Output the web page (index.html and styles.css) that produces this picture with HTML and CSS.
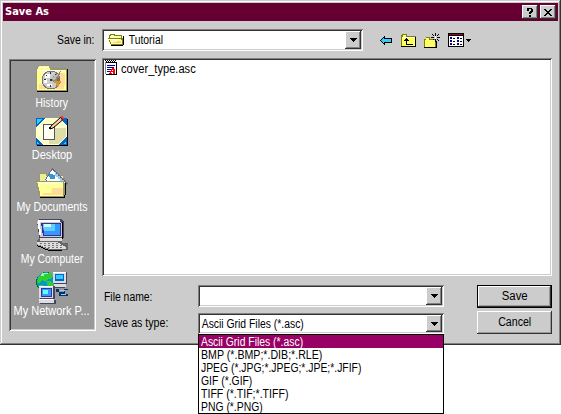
FILE: index.html
```html
<!DOCTYPE html>
<html lang="en">
<head>
<meta charset="utf-8">
<title>Save As</title>
<link rel="stylesheet" href="styles.css">
</head>
<body>
<main class="dialog">
  <header class="titlebar">
    <h1>Save As</h1>
    <button class="caption-button" aria-label="Help"><svg width="8" height="9" viewBox="0 0 8 9"><path d="M1 0h5v1h1v3H6v1H5v1H3V4h1V3h1V1H3v2H1zM3 7h2v2H3z"/></svg></button>
    <button class="caption-button" aria-label="Close"><svg width="8" height="7" viewBox="0 0 8 7"><path d="M0 0h2v1h1v1h2V1h1V0h2v1H7v1H6v1H5v1h1v1h1v1h1v1H6V6H5V5H3v1H2v1H0V6h1V5h1V4h1V3H2V2H1V1H0z"/></svg></button>
  </header>
  <div class="toolbar">
    <label class="save-in-label"><span class="t-savein">Save in:</span></label>
    <div class="combo look-in">
      <svg class="folder" width="17" height="14" viewBox="0 0 17 14"><path fill="#808000" d="M2 1h5v1h7v3h2v6h-1v1H3v-1H2V9H1V6H0V5h1V2h1z"/><path fill="#ffff99" d="M3 2h3v1h7v2H2V3h1zM1 6h12v1h1v4H3V9H2V7H1z"/><path fill="#fff" d="M3 3h4v1H3zM2 6h9v1H2z"/><path fill="#fc9" d="M5 9h8v1H5zM9 8h4v1H9z"/><path fill="#000" d="M15 3h1v9h-1v1H3v-1h12z"/></svg>
      <span class="value t-tutorial">Tutorial</span>
      <button class="arrow" aria-label="Open"><svg width="7" height="4" viewBox="0 0 7 4"><path d="M0 0h7v1H6v1H5v1H4v1H3V3H2V2H1V1H0z"/></svg></button>
    </div>
    <nav class="tools">
      <svg width="12" height="11" viewBox="0 0 12 11"><path d="M4 1h1v2h7v5H5v2H4V9H3V8H2V7H1V6H0V5h1V4h1V3h1V2h1z"/><path fill="#3cf" d="M4 3v1h7v3H4v1H3V7H2V6H1V5h1V4h1V3z"/></svg>
      <svg width="15" height="13" viewBox="0 0 15 13"><path fill="#808000" d="M1 0h5v2h9v11H0V1h1z"/><path fill="#ffff66" d="M2 1h3v2h9v9H1V3h1z"/><path fill="#fff" d="M1 3h13v1H1z"/><path d="M5 4h1v1h1v1h1v1H6v3h6v1H5V7H3V6h1V5h1zM14 3h1v10H0v-1h14z"/></svg>
      <svg width="16" height="15" viewBox="0 0 16 15"><path fill="#808000" d="M2 4h4v2h6v9H0V6h2z"/><path fill="#ffff66" d="M2 5h3v2h6v7H1V7h1z"/><path d="M12 8h1v7H0v-1h12zM11 0h1v3h-1zM8 1h1v1H8zM9 2h1v1H9zM14 1h1v1h-1zM13 2h1v1h-1zM7 4h3v1H7zM13 4h3v1h-3zM9 6h1v1H9zM13 6h1v1h-1zM14 7h1v1h-1zM11 6h1v3h-1z"/><path fill="#ccc" d="M10 3h3v3h-3z"/><path fill="#fff" d="M11 3h1v3h-1z"/></svg>
      <svg width="23" height="14" viewBox="0 0 23 14"><path d="M0 0h16v14H0z"/><path fill="#fff" d="M1 3h14v10H1z"/><path fill="#903" d="M1 1h14v1H1z"/><path fill="#009" d="M2 4h2v2H2zM9 4h2v2H9zM2 7h2v2H2zM9 7h2v2H9zM2 10h2v2H2zM9 10h2v2H9z"/><path d="M5 5h2v1H5zM12 5h2v1h-2zM5 8h2v1H5zM12 8h2v1h-2zM5 11h2v1H5zM12 11h2v1h-2zM18 6h5v1h-1v1h-1v1h-1V8h-1V7h-1z"/></svg>
    </nav>
  </div>
  <div class="content">
    <aside class="places">
      <a class="place">
        <svg width="32" height="32" viewBox="0 0 32 32"><path fill="#996" d="M0 4h1V3h1V2h1V1h10v1h1v1h1v1h16v23H0z"/><path fill="#ffff99" d="M1 5h1V3h1V2h10v2h1v2h16v20H1z"/><path fill="#fd9" d="M3 20h25v5H3zM23 9h6v12h-6z"/><path fill="#fff" d="M3 3h9v1H3zM1 6h28v1H1z"/><path d="M31 5h1v23H1v-1h30z"/><circle cx="15" cy="16" r="9.5" fill="#777"/><circle cx="15" cy="16" r="8.5" fill="#ccc"/><path fill="#fff" d="M9 10h5v4H9zM8 15h3v4H8zM11 20h5v2h-5z"/><path fill="#888" d="M14 15L25 7l-3 9-5 2z"/><path fill="#bbb" d="M14 15L23 9l-4 7z"/><path fill="#c93" d="M18 17h7v2h-2v3h-3v-3h-2z"/><path fill="#963" d="M21 14h3v3h-3z"/><path fill="#333" d="M14 8h1v2h-1zM8 15h2v1H8zM14 21h1v2h-1zM10 11h1v1h-1zM19 10h1v1h-1zM14 15h2v2h-2z"/></svg>
        <span class="t-history">History</span>
      </a>
      <a class="place">
        <svg width="32" height="32" viewBox="0 0 32 32"><path d="M1 3h31v27H1z"/><path fill="#ffc" d="M0 2h31v27H0z"/><path fill="#dda" d="M19 12l11 0v8l-8 8h-9v-4h6z"/><path fill="#06c" d="M0 2h9L0 11zM24 2h7v8zM0 22l8 7H0zM31 21v8h-9z"/><path fill="#3cf" d="M1 3h5L1 8zM1 26l3 2H1zM27 28l3-3v3z"/><path fill="#555" d="M7 8h12v16H7z"/><path fill="#fff" d="M8 9h10v14H8z"/><path fill="#ffe" d="M10 13h8v9h-8z"/><path shape-rendering="auto" stroke="#000" stroke-width="1" fill="#fc9" d="M14 13l1-3L24.500 1.500l2 2.500L17 12z"/><path d="M13 11h1v1h1v1h-2z"/><path fill="#f33" d="M25 0h2v1h1v2h-2V2h-1z"/></svg>
        <span class="t-desktop">Desktop</span>
      </a>
      <a class="place">
        <svg width="32" height="32" viewBox="0 0 32 32"><path fill="#996" d="M3 6h1V5h7v2h16v3h2v18H3z"/><path fill="#ee9" d="M4 6h6v2h17v5H4z"/><path fill="#668" d="M9 12L16 0l16 15-7 8z"/><path fill="#fff" d="M10 12l6-10 14 13-5 6z"/><path fill="#39c" d="M13 6h4v1h2v4h-5V9h-1z"/><path fill="#9cf" d="M19 4h1v2h2v2h2v2h2v2h2v2h-2v-1h-2v-2h-2v-2h-2V8h-1z"/><path d="M4 29h24v-2h1V15h1v12h-1v3H4z"/><path fill="#996" d="M0 12h2v1h26v2h1v11h-1v3H3v-3H2v-6H1v-5H0z"/><path fill="#ff9" d="M1 14h26v14H4v-5H3v-4H2v-4H1z"/><path fill="#fd9" d="M16 20h11v7H16zM7 25h10v2H7z"/><path fill="#ffc" d="M2 14h24v2H2z"/></svg>
        <span class="t-documents">My Documents</span>
      </a>
      <a class="place">
        <svg width="32" height="32" viewBox="0 0 32 32"><path fill="#446" d="M1 1l2-2h22l3 3v16l-3 1H4l-1-3z"/><path fill="#ccc" d="M1 1h22l3 2v14H4z"/><path fill="#fff" d="M2 0h22v2H2zM2 2h2l1 13H3z"/><path fill="#339" d="M5 3h20v13H7z"/><path fill="#39f" d="M7 4h17v11H8z"/><path fill="#6cf" d="M7 4h12v7H8z"/><path fill="#cff" d="M8 4h7v3H8z"/><path fill="#666" d="M4 18h22v5h6v7H14L1 24v-4z"/><path fill="#ddd" d="M4 18h22v3H4zM1 22h20l9 5v2H14L1 24z"/><path d="M1 25l12 5h13v1H13L1 26zM26 2h1v17h-1z"/><path fill="#777" d="M4 23h2v1H4zM8 23h2v1H8zM12 23h2v1h-2zM16 23h2v1h-2zM20 23h2v1h-2zM8 25h2v1H8zM12 25h2v1h-2zM16 25h2v1h-2zM20 25h2v1h-2zM24 25h2v1h-2zM12 27h2v1h-2zM16 27h2v1h-2zM20 27h2v1h-2zM24 27h2v1h-2z"/></svg>
        <span class="t-computer">My Computer</span>
      </a>
      <a class="place">
        <svg width="32" height="32" viewBox="0 0 32 32"><circle cx="10" cy="10" r="10" fill="#063"/><circle cx="10" cy="9.5" r="9.3" fill="#09c"/><path fill="#3c3" d="M2 5l5-4h7l3 3-2 3-3 0-2 3-4-2-3 3-2 0zM11 9h4l3 4-3 3-4-3zM3 13h3l3 3-4 2z"/><path fill="#9f9" d="M6 1h6v1H8v2H5z"/><path fill="#446" d="M18 0h13v12h-2v4h-11z"/><path fill="#ddd" d="M17 0h13v11H17zM18 12h12v3H18z"/><path fill="#fff" d="M17 0h13v1H17z"/><path fill="#06c" d="M19 2h9v7h-9z"/><path fill="#3cf" d="M20 3h7v4h-7z"/><path fill="#036" d="M20 17h3v3h5v-3h4v1h-3v4h3v2h-9v-4h-3z"/><path fill="#9cf" d="M24 18h5v1h-5zM25 22h5v1h-5z"/><path fill="#446" d="M4 14h15v13H4zM4 28h16v4H4z"/><path fill="#ddd" d="M3 14h14v12H3zM3 27h15v4H3z"/><path fill="#fff" d="M3 14h14v1H3zM3 27h14v1H3z"/><path fill="#339" d="M5 16h11v9H5z"/><path fill="#39f" d="M6 17h9v7H6z"/><path fill="#6ff" d="M7 18h5v4H7z"/></svg>
        <span class="t-network">My Network P...</span>
      </a>
    </aside>
    <section class="pane">
      <div class="files">
        <svg width="13" height="16" viewBox="0 0 13 16"><path d="M1 2h11v13H1z"/><path fill="#fff" d="M1 3h10v11H1z"/><path fill="#888" d="M0 2h1v12H0z"/><path d="M0 0h1v1H0zM2 0h1v1H2zM4 0h1v1H4zM6 0h1v1H6zM8 0h1v1H8zM10 0h1v1h-1zM1 1h1v1H1zM3 1h1v1H3zM5 1h1v1H5zM7 1h1v1H7zM9 1h1v1H9z"/><path fill="#009" d="M2 5h8v1H2zM2 7h7v1H2zM2 9h4v1H2zM2 11h3v1H2z"/><path fill="#f00" d="M7 8h2v1h1v5H8v-2H6v1h1v1H4v-1h1v-2h1V9h1zM7 10v1h1v-1z"/></svg>
        <span class="t-file">cover_type.asc</span>
      </div>
      <form class="fields">
        <label><span class="t-filename">File name:</span></label>
        <div class="combo"><span class="value"></span><button type="button" class="arrow" aria-label="Open"><svg width="7" height="4" viewBox="0 0 7 4"><path d="M0 0h7v1H6v1H5v1H4v1H3V3H2V2H1V1H0z"/></svg></button></div>
        <button type="button" class="push default"><span class="t-save">Save</span></button>
        <label><span class="t-type">Save as type:</span></label>
        <div class="combo type">
          <span class="value t-asc">Ascii Grid Files (*.asc)</span><button type="button" class="arrow" aria-label="Open"><svg width="7" height="4" viewBox="0 0 7 4"><path d="M0 0h7v1H6v1H5v1H4v1H3V3H2V2H1V1H0z"/></svg></button>
          <ul class="options">
            <li class="selected"><span class="t-asc">Ascii Grid Files (*.asc)</span></li>
            <li><span class="t-bmp">BMP (*.BMP;*.DIB;*.RLE)</span></li>
            <li><span class="t-jpeg">JPEG (*.JPG;*.JPEG;*.JPE;*.JFIF)</span></li>
            <li><span class="t-gif">GIF (*.GIF)</span></li>
            <li><span class="t-tiff">TIFF (*.TIF;*.TIFF)</span></li>
            <li><span class="t-png">PNG (*.PNG)</span></li>
          </ul>
        </div>
        <button type="button" class="push"><span class="t-cancel">Cancel</span></button>
      </form>
    </section>
  </div>
</main>
</body>
</html>
```
FILE: styles.css
```css
* { box-sizing: border-box; }
body { margin: 0; min-height: 414px; background: #fff; color: #000; font: 12px/13px "Liberation Sans", Arial, sans-serif; }
svg { display: block; flex: none; shape-rendering: crispEdges; overflow: visible; }
span { display: inline-block; white-space: nowrap; transform: scaleX(.865); transform-origin: 0 50%; }
button { font: inherit; color: inherit; padding: 0; border: 0; margin: 0; background: #ccc; display: flex; align-items: center; justify-content: center; }

.dialog { width: 561px; height: 345px; padding: 3px; background: #ccc; box-shadow: inset -1px -1px #333, inset 1px 1px #ccc, inset -2px -2px #808080, inset 2px 2px #fff; }
.titlebar { display: flex; align-items: center; height: 18px; padding: 0 2px; background: #603; color: #fff; }
.titlebar h1 { flex: 1; margin: 0; font: bold 11px/18px "DejaVu Sans Condensed", "DejaVu Sans", sans-serif; }
.caption-button { width: 16px; height: 14px; color: #000; box-shadow: inset -1px -1px #333, inset 1px 1px #fff, inset -2px -2px #808080; }
.caption-button + .caption-button { margin-left: 2px; }

.toolbar { display: flex; align-items: center; height: 38px; }
.save-in-label { width: 99px; padding-left: 54px; }
.combo { position: relative; display: flex; align-items: center; height: 22px; padding: 2px; background: #fff; box-shadow: inset 1px 1px #808080, inset -1px -1px #fff, inset 2px 2px #333, inset -2px -2px #ccc; }
.look-in { width: 261px; }
.folder { margin: 0 2px 0 4px; }
.value { flex: 1; padding-left: 2px; }
.arrow { width: 16px; height: 18px; flex: none; box-shadow: inset -1px -1px #333, inset 1px 1px #fff, inset -2px -2px #808080; }
.tools { display: flex; align-items: center; gap: 8px; margin-left: 17px; }
.tools svg:first-child { margin-right: 1px; }

.content { display: flex; gap: 6px; padding-left: 6px; }
.places { width: 87px; height: 272px; padding: 5px 3px 0 2px; background: #999; color: #fff; box-shadow: inset 1px 1px #808080, inset -1px -1px #fff, inset 2px 2px #333, inset -2px -2px #ccc; }
.place { display: flex; flex-direction: column; align-items: center; height: 52px; }
.place span { margin-top: 1px; transform-origin: 50% 50%; }
.pane { width: 450px; }
.files { display: flex; align-items: flex-start; gap: 3px; height: 218px; padding: 2px 3px; margin-top: -1px; background: #fff; box-shadow: inset 1px 1px #808080, inset -1px -1px #fff, inset 2px 2px #333, inset -2px -2px #ccc; }
.files span { margin-top: 3px; }
.fields { display: grid; grid-template-columns: 96px 246px 75px; grid-template-rows: 23px 23px; column-gap: 0; row-gap: 3px; justify-content: start; align-items: center; margin-top: 9px; }
.fields label { padding: 2px 0 0 2px; }
.fields .push { height: 23px; margin-left: 33px; width: 75px; }
.fields .combo { align-self: start; }
.fields .type { margin-top: 2px; height: 21px; }
.type .arrow { height: 17px; }
.type > .value { padding-top: 1px; }
.push { box-shadow: inset -1px -1px #333, inset 1px 1px #fff, inset -2px -2px #999; }
.push span { transform-origin: 50% 50%; }
.push.default { box-shadow: inset 0 0 0 1px #000, inset -2px -2px #333, inset 2px 2px #fff, inset -3px -3px #999; }
.options { position: absolute; left: 0; top: 21px; width: 246px; height: 80px; list-style: none; margin: 0; padding: 0; background: #fff; border: 1px solid #000; z-index: 1; }
.options li { height: 13px; padding-left: 2px; line-height: 15px; }
.options .selected { background: #906; color: #fff; }

.t-file { transform: scaleX(.926); }
.t-desktop { transform: scaleX(.92); }
.t-documents { transform: scaleX(.89); }
.t-network { transform: scaleX(.915); }
.t-type, .t-bmp, .t-cancel { transform: scaleX(.885); }
.t-tiff { transform: scaleX(.88); }
.t-save { transform: scaleX(.95); }
```
